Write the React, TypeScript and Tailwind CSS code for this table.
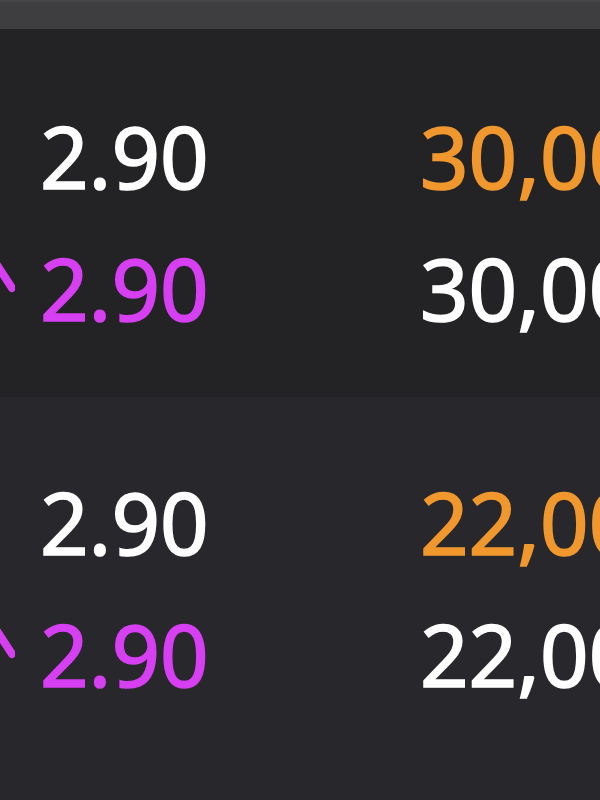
const ROWS = [
  { bid: '2.90', ask: '2.90', bidQty: '30,000', askQty: '30,000' },
  { bid: '2.90', ask: '2.90', bidQty: '22,000', askQty: '22,000' },
]

function Chevron() {
  return (
    <svg width="40" height="60" viewBox="0 0 40 60" className="-ml-[65px] mr-[25px] shrink-0" fill="none">
      <polyline points="2,30 20,4 37,30" stroke="#d53ff0" strokeWidth="8" strokeLinecap="round" strokeLinejoin="round" />
    </svg>
  )
}

export default function App() {
  return (
    <div className="w-[600px] h-[800px] overflow-hidden bg-[#28272c] text-white" style={{ fontFamily: '"Noto Sans", sans-serif' }}>
      {/* top bar */}
      <div className="h-[29px] bg-[#3e3e41] border-t-2 border-[#464649]" />

      {ROWS.map((r, i) => (
        <div
          key={i}
          className={`pl-[40px] pb-[43px] text-[85px] leading-[132px] [-webkit-text-stroke:1.6px_currentColor] ${i === 0 ? 'bg-[#232326] pt-[61px]' : 'bg-[#28272c] pt-[59px]'}`}
        >
          <div className="flex whitespace-nowrap">
            <div className="w-[380px] shrink-0">{r.bid}</div>
            <div className="text-[#f0982e]">{r.bidQty}</div>
          </div>
          <div className="flex whitespace-nowrap">
            <div className="w-[380px] shrink-0 flex items-center text-[#d63ff2]">
              <Chevron />
              <span>{r.ask}</span>
            </div>
            <div>{r.askQty}</div>
          </div>
        </div>
      ))}
    </div>
  )
}
